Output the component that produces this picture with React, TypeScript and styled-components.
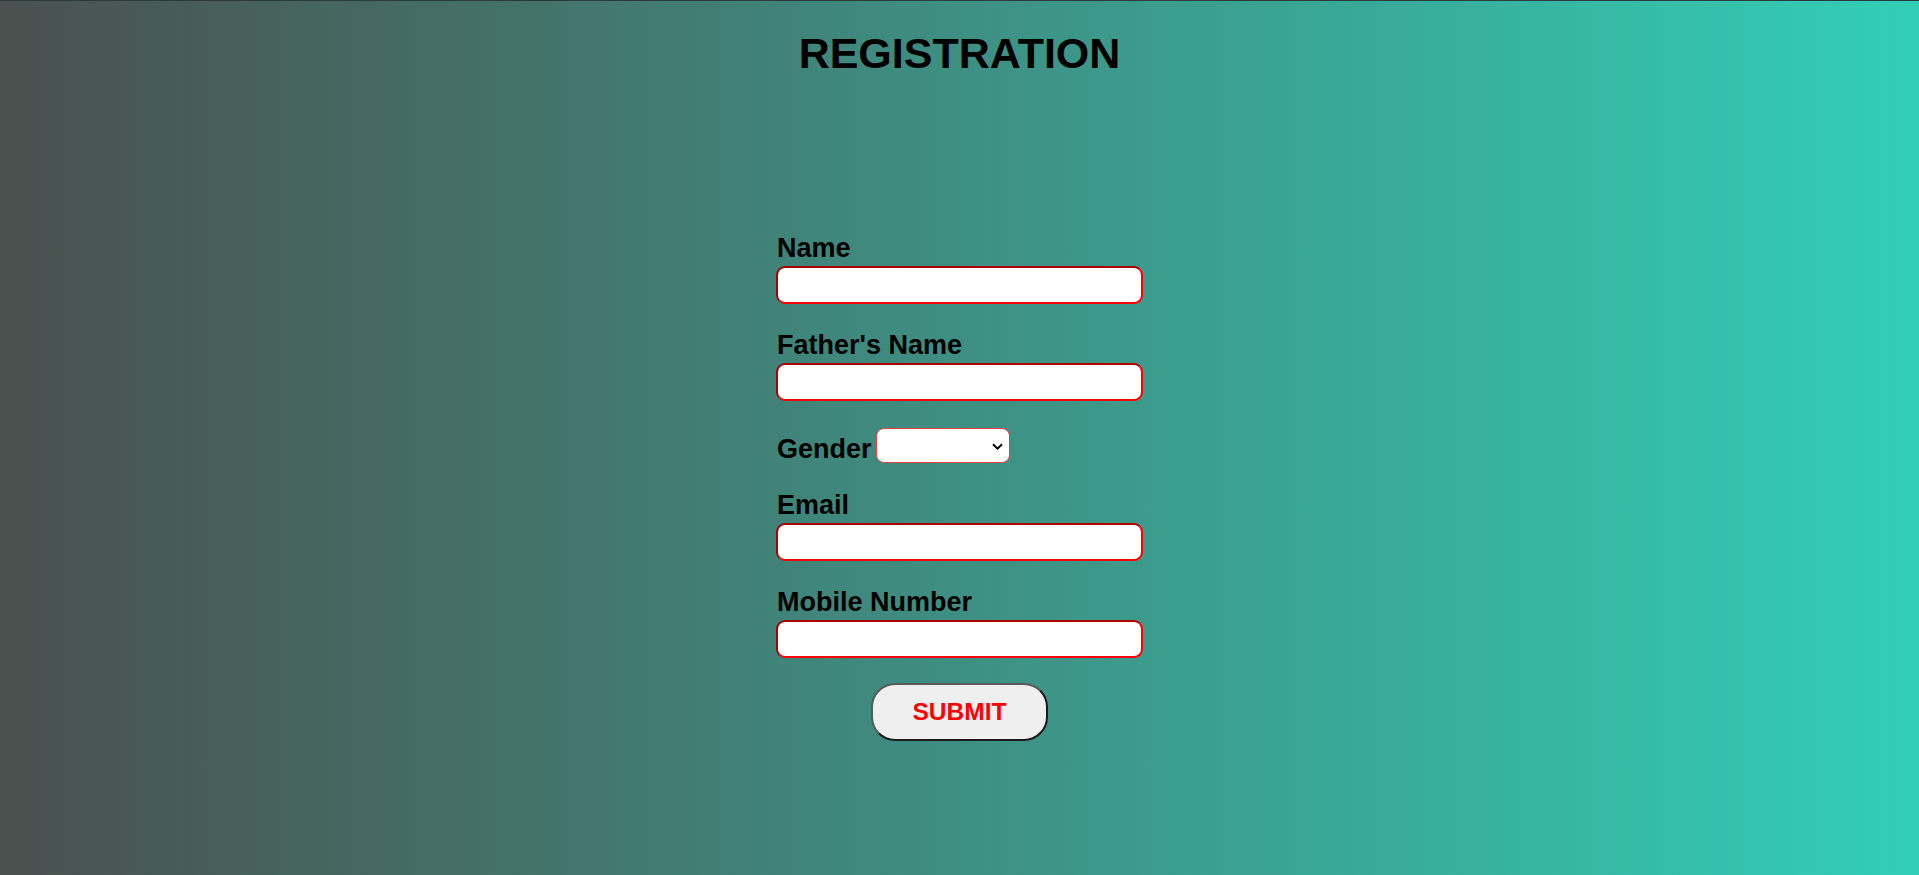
import React from "react";
import styled, { createGlobalStyle } from "styled-components";

const GlobalStyle = createGlobalStyle`
  html, body {
    margin: 0;
    padding: 0;
  }
  body {
    font-family: "Liberation Sans", Arial, sans-serif;
    min-height: 875px;
    background: linear-gradient(to right, #4a504e, #32ceb7);
  }
`;

const Page = styled.div`
  min-height: 874px;
  border-top: 1px solid #2b3a3a;
  display: flex;
  flex-direction: column;
  align-items: center;
`;

const Title = styled.h1`
  margin: 28px 0 0;
  font-size: 43px;
  line-height: 48px;
  font-weight: 700;
  color: #000;
`;

const Form = styled.form`
  width: 367px;
  margin-top: 156px;
  display: flex;
  flex-direction: column;
`;

const Field = styled.div<{ $top?: number }>`
  display: flex;
  flex-direction: column;
  margin-top: ${(p) => p.$top ?? 26}px;
`;

const Label = styled.label`
  font-size: 27px;
  line-height: 30px;
  font-weight: 700;
  color: #000;
  padding-left: 1px;
  white-space: nowrap;
`;

const Input = styled.input`
  box-sizing: border-box;
  margin-top: 3px;
  width: 100%;
  height: 38px;
  border: 2px inset #ff0000;
  border-radius: 9px;
  background: #fff;
  outline: none;
  font-size: 18px;
  padding: 0 8px;
`;

const InlineRow = styled.div`
  display: flex;
  align-items: flex-start;
  margin-top: 27px;
`;

const InlineLabel = styled(Label)`
  margin-top: 6px;
`;

const SelectWrap = styled.div`
  position: relative;
  margin-left: 4px;
  width: 134px;
  height: 35px;
`;

const Select = styled.select`
  box-sizing: border-box;
  appearance: none;
  -webkit-appearance: none;
  width: 100%;
  height: 100%;
  border: 1px solid #e8403f;
  border-radius: 8px;
  background: #fff;
  font-size: 16px;
  padding: 0 24px 0 6px;
  outline: none;
`;

const Chevron = styled.svg`
  position: absolute;
  right: 7px;
  top: 15px;
  width: 11px;
  height: 7px;
  pointer-events: none;
`;

const ButtonRow = styled.div`
  display: flex;
  justify-content: center;
  margin-top: 25px;
`;

const SubmitButton = styled.button`
  box-sizing: border-box;
  width: 177px;
  height: 58px;
  border: 2px solid;
  border-color: #5a5a5a #1a1a1a #1a1a1a #5a5a5a;
  border-radius: 24px;
  background: #efefef;
  color: #ff0000;
  font-family: "Liberation Sans", Arial, sans-serif;
  font-size: 24.5px;
  font-weight: 700;
  cursor: pointer;
`;

export default function App() {
  return (
    <>
      <GlobalStyle />
      <Page>
        <Title>REGISTRATION</Title>
        <Form onSubmit={(e) => e.preventDefault()}>
          <Field $top={0}>
            <Label htmlFor="name">Name</Label>
            <Input id="name" type="text" />
          </Field>
          <Field>
            <Label htmlFor="father">Father's Name</Label>
            <Input id="father" type="text" />
          </Field>
          <InlineRow>
            <InlineLabel htmlFor="gender">Gender</InlineLabel>
            <SelectWrap>
              <Select id="gender" defaultValue="">
                <option value=""></option>
                <option value="male">Male</option>
                <option value="female">Female</option>
                <option value="other">Other</option>
              </Select>
              <Chevron viewBox="0 0 11 7" aria-hidden="true">
                <path d="M1 1.2 L5.5 5.6 L10 1.2" fill="none" stroke="#000" strokeWidth="2" />
              </Chevron>
            </SelectWrap>
          </InlineRow>
          <Field>
            <Label htmlFor="email">Email</Label>
            <Input id="email" type="email" />
          </Field>
          <Field>
            <Label htmlFor="mobile">Mobile Number</Label>
            <Input id="mobile" type="tel" />
          </Field>
          <ButtonRow>
            <SubmitButton type="submit">SUBMIT</SubmitButton>
          </ButtonRow>
        </Form>
      </Page>
    </>
  );
}
